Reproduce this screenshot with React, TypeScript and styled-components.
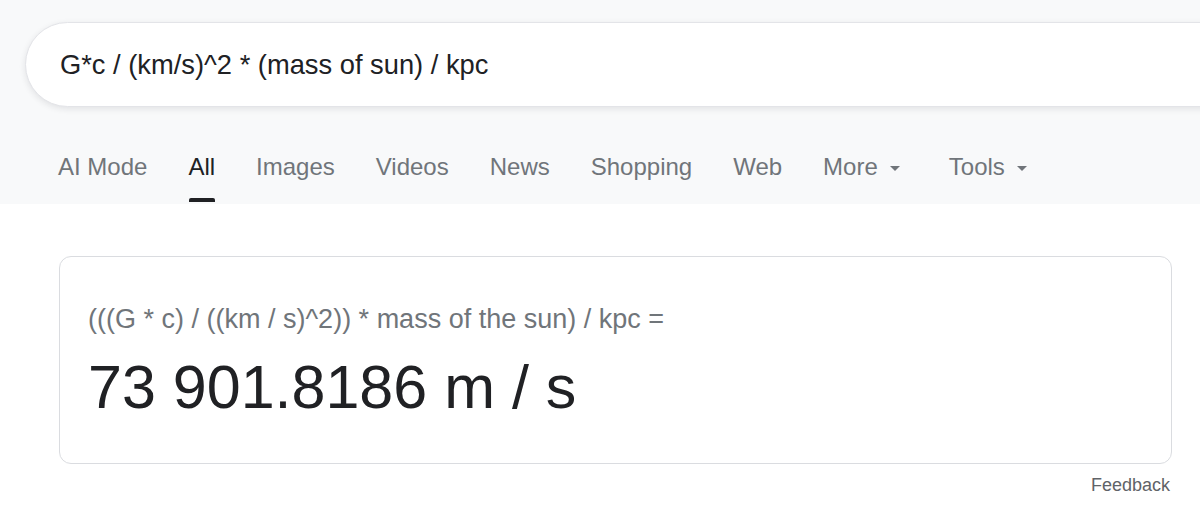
import React from "react";
import styled, { createGlobalStyle } from "styled-components";

const tabs = [
  { label: "AI Mode" },
  { label: "All", active: true },
  { label: "Images" },
  { label: "Videos" },
  { label: "News" },
  { label: "Shopping" },
  { label: "Web" },
  { label: "More", menu: true },
];

const GlobalStyle = createGlobalStyle`
  html, body {
    margin: 0;
    padding: 0;
    background: #ffffff;
    font-family: "Liberation Sans", Arial, sans-serif;
    color: #202124;
  }
`;

const Page = styled.div`
  width: 1200px;
  height: 516px;
  overflow: hidden;
`;

const Header = styled.header`
  height: 204px;
  background: #f8f9fa;
  padding-top: 22px;
  box-sizing: border-box;
  overflow: hidden;
`;

const SearchBox = styled.div`
  margin-left: 25px;
  width: 1300px;
  height: 85px;
  box-sizing: border-box;
  display: flex;
  align-items: center;
  padding-left: 34px;
  background: #ffffff;
  border: 1px solid #e3e4e8;
  border-radius: 43px;
  box-shadow: 0 2px 6px rgba(32, 33, 36, 0.1);
  font-size: 27.3px;
  color: #202124;
`;

const TabRow = styled.nav`
  display: flex;
  align-items: flex-start;
  gap: 41px;
  margin-top: 46px;
  padding-left: 58px;
`;

const Tab = styled.div<{ $active?: boolean; $extra?: number }>`
  display: flex;
  flex-direction: column;
  align-items: center;
  margin-left: ${(p) => p.$extra || 0}px;
  font-size: 24px;
  line-height: 28px;
  color: ${(p) => (p.$active ? "#202124" : "#70757a")};

  &::after {
    content: "";
    display: block;
    width: 26px;
    height: 4px;
    margin-top: 17px;
    border-radius: 2px 2px 0 0;
    background: ${(p) => (p.$active ? "#202124" : "transparent")};
  }
`;

const TabLabel = styled.span`
  display: flex;
  align-items: center;
  white-space: nowrap;
`;

const Caret = styled.svg`
  width: 10px;
  height: 5px;
  margin-left: 12px;
  margin-top: 2px;
  fill: #70757a;
`;

const Main = styled.main`
  width: 1113px;
  margin: 52px 0 0 59px;
`;

const Card = styled.section`
  height: 208px;
  box-sizing: border-box;
  padding: 46px 28px 0;
  border: 1px solid #dadce0;
  border-radius: 12px;
  background: #ffffff;
`;

const Expression = styled.div`
  font-size: 27px;
  line-height: 32px;
  color: #70757a;
  white-space: nowrap;
`;

const Result = styled.div`
  margin-top: 17px;
  font-size: 61px;
  line-height: 70px;
  color: #202124;
  white-space: nowrap;
`;

const FeedbackRow = styled.div`
  display: flex;
  justify-content: flex-end;
  margin-top: 10px;
  padding-right: 2px;
`;

const Feedback = styled.span`
  font-size: 18px;
  line-height: 22px;
  color: #5f6368;
`;

const DownCaret = () => (
  <Caret viewBox="0 0 10 5">
    <path d="M0 0h10L5 5z" />
  </Caret>
);

export default function App() {
  return (
    <Page>
      <GlobalStyle />
      <Header>
        <SearchBox>G*c / (km/s)^2 * (mass of sun) / kpc</SearchBox>
        <TabRow>
          {tabs.map((t) => (
            <Tab key={t.label} $active={t.active}>
              <TabLabel>
                {t.label}
                {t.menu && <DownCaret />}
              </TabLabel>
            </Tab>
          ))}
          <Tab $extra={8}>
            <TabLabel>
              Tools
              <DownCaret />
            </TabLabel>
          </Tab>
        </TabRow>
      </Header>
      <Main>
        <Card>
          <Expression>
            (((G * c) / ((km / s)^2)) * mass of the sun) / kpc =
          </Expression>
          <Result>73 901.8186 m / s</Result>
        </Card>
        <FeedbackRow>
          <Feedback>Feedback</Feedback>
        </FeedbackRow>
      </Main>
    </Page>
  );
}
